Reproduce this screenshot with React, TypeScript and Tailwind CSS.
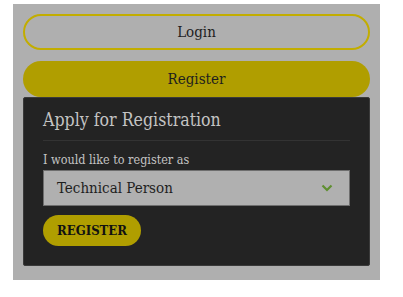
import React from "react";

export default function App() {
  const serif = { fontFamily: '"DejaVu Serif Condensed", "DejaVu Serif", "Liberation Serif", serif' };
  return (
    <div className="w-[403px] h-[297px] bg-white" style={serif}>
      <div className="ml-[13px] pt-[4px]">
        <div className="w-[367px] h-[276px] bg-[#afafaf] px-[10px] pt-[10px] flex flex-col">
          <button className="h-[36px] w-full rounded-full border-2 border-[#c2ad00] text-[#1e1e1e] text-[15px] flex items-center justify-center">
            Login
          </button>
          <button className="mt-[11px] h-[36px] w-full rounded-full bg-[#b09e00] text-[#1e1e1e] text-[15px] flex items-center justify-center">
            Register
          </button>
          <div className="h-[169px] w-full bg-[#232323] rounded-[2px] border border-[#3a3a3a] px-[19px] pt-[9px]">
            <div className="text-[17.6px] text-[#c4c4c4] leading-[26px]">Apply for Registration</div>
            <div className="mt-[7px] h-px bg-[#333333]" />
            <div className="mt-[11px] text-[12.5px] text-[#c4c4c4] leading-[16px]">I would like to register as</div>
            <div className="mt-[2px] h-[36px] bg-[#b0b0b0] border border-[#6e6e6e] flex items-center justify-between pl-[13px] pr-[16px]">
              <span className="text-[15px] text-[#1e1e1e]">Technical Person</span>
              <svg width="12" height="8" viewBox="0 0 12 8">
                <path d="M1.5 1.5 L6 6 L10.5 1.5" fill="none" stroke="#5f8f30" strokeWidth="2.2" />
              </svg>
            </div>
            <button className="mt-[9px] h-[31px] w-[98px] rounded-full bg-[#b09e00] text-[#111] text-[13px] font-bold flex items-center justify-center">
              REGISTER
            </button>
          </div>
        </div>
      </div>
    </div>
  );
}
